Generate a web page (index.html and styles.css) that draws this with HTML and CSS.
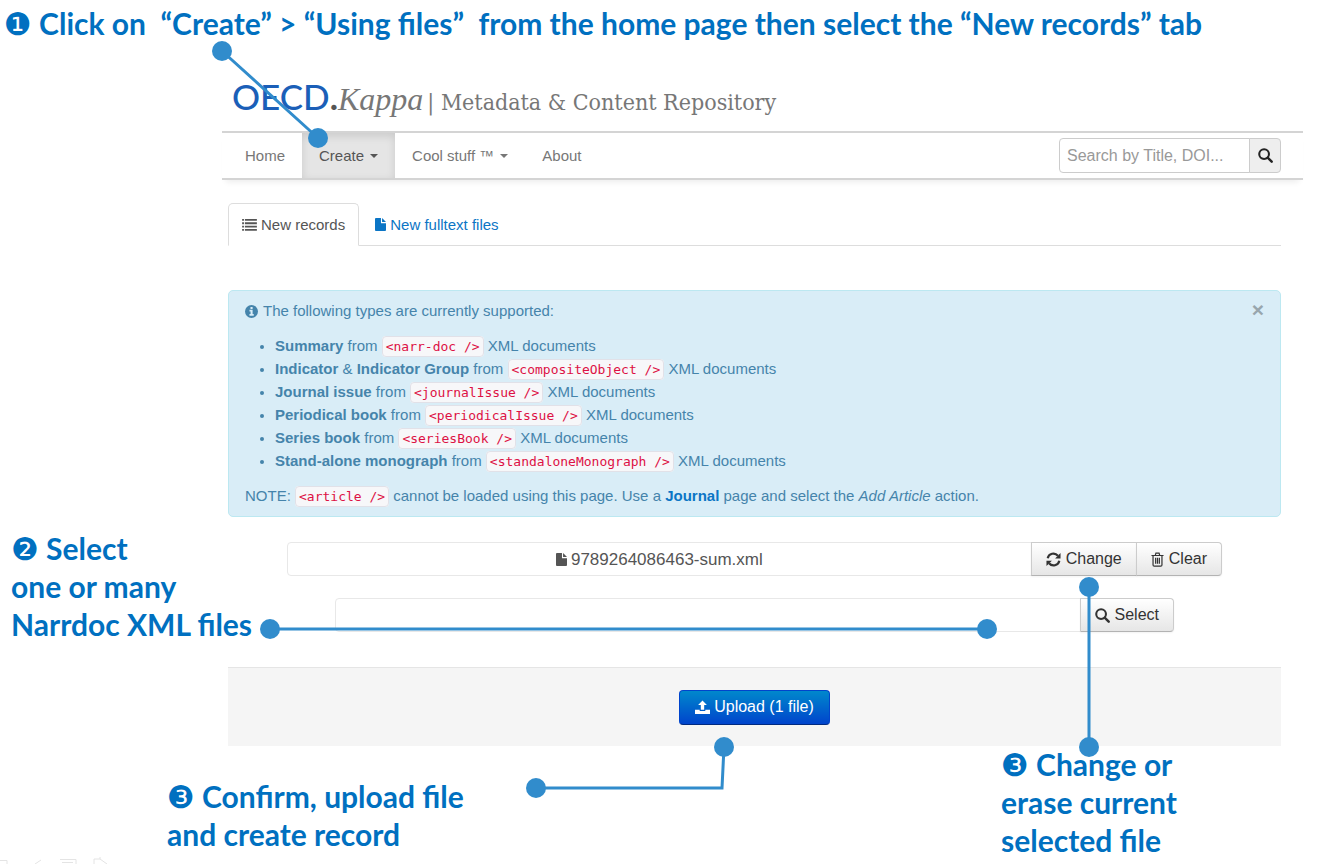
FILE: index.html
```html
<!DOCTYPE html>
<html lang="en">
<head>
<meta charset="utf-8">
<title>OECD.Kappa | Metadata &amp; Content Repository</title>
<link rel="stylesheet" href="styles.css">
</head>
<body>
<svg class="sprite" aria-hidden="true">
  <symbol id="i-search" viewBox="0 0 16 16"><circle cx="6.5" cy="6.5" r="5.2" fill="none" stroke="currentColor" stroke-width="2.2"/><path d="M10.300 10.300l4.300 4.300" stroke="currentColor" stroke-width="2.600" stroke-linecap="round"/></symbol>
  <symbol id="i-file" viewBox="0 0 12 14"><path fill="currentColor" d="M1 0h5.5v5.500H12V13a1 1 0 0 1-1 1H1a1 1 0 0 1-1-1V1a1 1 0 0 1 1-1zM7.700 0L12 4.300H7.700z"/></symbol>
  <symbol id="i-list" viewBox="0 0 16 13"><path fill="currentColor" d="M0 0h2v2H0zM3 0h13v2H3zM0 3.600h2v2H0zM3 3.600h13v2H3zM0 7.200h2v2H0zM3 7.200h13v2H3zM0 10.800h2v2H0zM3 10.800h13v2H3z"/></symbol>
  <symbol id="i-info" viewBox="0 0 14 14"><circle cx="7" cy="7" r="7" fill="currentColor"/><path fill="#d9edf7" d="M5.900 2.200h2.300v2H5.900zM4.800 5.200h3.400v4.500h1.200v1.800H4.800V9.700H6V7H4.800z"/></symbol>
  <symbol id="i-refresh" viewBox="0 0 16 16"><path fill="none" stroke="currentColor" stroke-width="2.300" d="M1.800 6.700A6.200 6.200 0 0 1 12.700 4M14.200 9.300A6.200 6.200 0 0 1 3.300 12"/><path fill="currentColor" d="M15.500 1v5.800H9.700zM.5 15V9.200h5.800z"/></symbol>
  <symbol id="i-trash" viewBox="0 0 14 16"><path fill="none" stroke="currentColor" stroke-width="1.300" d="M.5 3.700h13M2.200 3.700v10.100a1.300 1.300 0 0 0 1.300 1.300h7a1.300 1.300 0 0 0 1.300-1.300V3.700M4.600 3.500l.7-2.300h3.400l.7 2.300M5 6.200v6.500M7 6.200v6.500M9 6.200v6.500"/></symbol>
  <symbol id="i-upload" viewBox="0 0 16 15"><path fill="currentColor" d="M8 0l4.700 4.800H9.800v5H6.200v-5H3.300zM0 10h5v1.200h6V10h5v4.500H0z"/></symbol>
</svg>

<div class="slide">
  <h1 class="callout step-1"><span class="num">❶</span> Click on &nbsp;“Create” &gt; “Using files” &nbsp;from the home page then select the “New records” tab</h1>

  <div class="app">
    <header class="brand">
      <span class="brand-org">OECD</span><span class="brand-dot">.</span><span class="brand-name">Kappa</span>
      <span class="brand-tag">| Metadata &amp; Content Repository</span>
    </header>

    <nav class="navbar">
      <a class="nav-item" href="#home">Home</a>
      <a class="nav-item active" href="#create">Create <span class="caret"></span></a>
      <a class="nav-item" href="#cool">Cool stuff ™ <span class="caret"></span></a>
      <a class="nav-item" href="#about">About</a>
      <form class="search">
        <input class="search-input" type="text" aria-label="Search" placeholder="Search by Title, DOI...">
        <button class="search-button" type="button" aria-label="Search"><svg class="icon"><use href="#i-search"/></svg></button>
      </form>
    </nav>

    <main class="content">
      <div class="tabs">
        <a class="tab selected" href="#records"><svg class="icon-list"><use href="#i-list"/></svg>New records</a>
        <a class="tab" href="#fulltext"><svg class="icon-file"><use href="#i-file"/></svg>New fulltext files</a>
      </div>

      <section class="alert">
        <button class="close" type="button" aria-label="Close">×</button>
        <p><svg class="icon-info"><use href="#i-info"/></svg>The following types are currently supported:</p>
        <ul>
          <li><b>Summary</b> from <code>&lt;narr-doc /&gt;</code> XML documents</li>
          <li><b>Indicator</b> &amp; <b>Indicator Group</b> from <code>&lt;compositeObject /&gt;</code> XML documents</li>
          <li><b>Journal issue</b> from <code>&lt;journalIssue /&gt;</code> XML documents</li>
          <li><b>Periodical book</b> from <code>&lt;periodicalIssue /&gt;</code> XML documents</li>
          <li><b>Series book</b> from <code>&lt;seriesBook /&gt;</code> XML documents</li>
          <li><b>Stand-alone monograph</b> from <code>&lt;standaloneMonograph /&gt;</code> XML documents</li>
        </ul>
        <p>NOTE: <code>&lt;article /&gt;</code> cannot be loaded using this page. Use a <a class="journal" href="#journal">Journal</a> page and select the <i>Add Article</i> action.</p>
      </section>

      <div class="file-row">
        <div class="file-field"><svg class="icon-file"><use href="#i-file"/></svg>9789264086463-sum.xml</div>
        <button class="btn" type="button"><svg class="icon"><use href="#i-refresh"/></svg>Change</button>
        <button class="btn last" type="button"><svg class="icon-trash"><use href="#i-trash"/></svg>Clear</button>
      </div>
      <div class="file-row empty">
        <div class="file-field"></div>
        <button class="btn last" type="button"><svg class="icon"><use href="#i-search"/></svg>Select</button>
      </div>

      <div class="actions">
        <button class="upload" type="button"><svg class="icon"><use href="#i-upload"/></svg>Upload (1 file)</button>
      </div>
    </main>
  </div>

  <p class="callout step-2"><span class="num">❷</span> Select<br>one or many<br>Narrdoc XML files</p>
  <p class="callout step-3"><span class="num">❸</span> Confirm, upload file<br>and create record</p>
  <p class="callout step-4"><span class="num">❸</span> Change or<br>erase current<br>selected file</p>

  <svg class="connectors" width="1319" height="864" viewBox="0 0 1319 864" aria-hidden="true">
    <g fill="none" stroke="#318ccc" stroke-width="3"><path d="M222 51L318 138M270 629H987M1089 587V747M724 747L722 788H536"/></g>
    <g fill="#318ccc"><circle cx="222" cy="51" r="10"/><circle cx="318" cy="138" r="10"/><circle cx="270" cy="629" r="10"/><circle cx="987" cy="629" r="10"/><circle cx="1089" cy="587" r="10"/><circle cx="1089" cy="747" r="10"/><circle cx="724" cy="747" r="10"/><circle cx="536" cy="788" r="10"/></g>
    <path fill="none" stroke="#e4e4e4" d="M0 860.500h7v4M35 864l6-4M60 859.500h16v5M62 862.500h11M94 864v-5h6l7 5M100 859v-2"/>
  </svg>
</div>
</body>
</html>
```
FILE: styles.css
```css
* { box-sizing: border-box; }
body { margin: 0; background: #fff; color: #666; font: 15px/23px "Liberation Sans", Arial, sans-serif; }
p, ul, h1 { margin: 0; }
a { color: inherit; text-decoration: none; }
button, input { font-family: "Liberation Sans", Arial, sans-serif; font-size: 16px; }
.sprite { position: absolute; width: 0; height: 0; }
.slide { position: relative; min-height: 100vh; overflow: hidden; }

.callout { color: #0070c0; font: bold 30px/38px Lato, sans-serif; white-space: nowrap; }
.num { font: 31px/28px "DejaVu Sans", sans-serif; }
.step-1 { padding: 4px 0 0 4px; }
.step-2 { position: absolute; left: 11px; top: 529px; }
.step-3 { position: absolute; left: 167px; top: 777px; }
.step-4 { position: absolute; left: 1001px; top: 745px; }
.connectors { position: absolute; left: 0; top: 0; pointer-events: none; }

.app { padding: 0 16px 0 222px; }
.brand { display: flex; align-items: baseline; height: 89px; padding: 32px 0 0 10px; line-height: 44px; white-space: nowrap; }
.brand-org { font: 500 35px/44px Lato, sans-serif; color: #1b5fb8; }
.brand-dot { font: bold 35px/44px Lato, sans-serif; color: #555; }
.brand-name { font: italic 32px/44px "Liberation Serif", serif; color: #777; }
.brand-tag { margin-left: 4px; font: 23px/44px "DejaVu Serif Condensed", "DejaVu Serif", serif; font-stretch: condensed; color: #777; }

.navbar { display: flex; height: 49px; padding-left: 6px; padding-right: 22px; border-top: 2px solid #d4d4d4; border-bottom: 2px solid #d4d4d4; box-shadow: 0 6px 6px -4px rgba(0,0,0,.08); color: #777; }
.nav-item { display: flex; align-items: center; padding: 0 17px; }
.nav-item.active { background: #e5e5e5; box-shadow: inset 0 3px 8px rgba(0,0,0,.12); color: #555; }
.caret { margin-left: 6px; border: 4px solid transparent; border-top-color: currentColor; border-bottom: 0; }
.search { display: flex; align-self: center; width: 222px; height: 35px; margin-left: auto; }
.search-input { flex: 1; min-width: 0; padding: 0 7px; border: 1px solid #ccc; border-radius: 4px 0 0 4px; }
.search-input::placeholder { color: #999; }
.search-button { display: flex; align-items: center; justify-content: center; width: 32px; padding: 0; margin-left: -1px; border: 1px solid #ccc; border-radius: 0 4px 4px 0; background: #eee; color: #222; }

.icon { width: 15px; height: 15px; flex: none; }
.icon-list { width: 15px; height: 12px; margin-right: 4px; }
.icon-file { width: 11px; height: 13px; margin-right: 4px; }
.icon-info { width: 13px; height: 13px; margin-right: 5px; vertical-align: -2px; }
.icon-trash { width: 13px; height: 15px; }

.content { padding: 23px 22px 0 6px; }
.tabs { display: flex; height: 43px; border-bottom: 1px solid #ddd; color: #0b75c5; }
.tab { display: flex; align-items: center; height: 43px; padding: 0 13px; border: 1px solid transparent; margin-right: 2px; }
.tab.selected { border-color: #ddd; border-bottom-color: #fff; border-radius: 5px 5px 0 0; background: #fff; color: #555; }

.alert { position: relative; margin-top: 44px; padding: 8px 16px 9px; border: 1px solid #bce8f1; border-radius: 5px; background: #d9edf7; color: #4584ab; }
.alert ul { margin: 12px 0; padding-left: 30px; }
.alert li::marker { font-size: 13px; }
.alert b, .journal { font-weight: 700; }
.journal { color: #0b75c5; }
.alert code { padding: 2px 3px; border: 1px solid #e1e1e8; border-radius: 4px; background: #f7f7f9; color: #d14; font: 13px/16px "DejaVu Sans Mono", monospace; }
.close { position: absolute; right: 16px; top: 8px; padding: 0; border: 0; background: none; color: #98a6ad; font: bold 21px/21px "Liberation Sans", sans-serif; }

.file-row { display: flex; height: 34px; margin-top: 25px; padding: 0 59px; }
.file-row.empty { margin-top: 22px; padding: 0 107px; }
.file-field { display: flex; flex: 1; align-items: center; justify-content: center; border: 1px solid #e8e8e8; border-radius: 4px 0 0 4px; color: #555; font: 17px/23px "Liberation Sans", Arial, sans-serif; }
.btn, .upload { display: flex; align-items: center; gap: 4px; border: 1px solid #ccc; }
.btn { padding: 0 14px; margin-left: -1px; gap: 5px; border-bottom-color: #b3b3b3; background: linear-gradient(#fff, #e6e6e6); box-shadow: 0 1px 2px rgba(0,0,0,.05); color: #333; }
.btn.last { border-radius: 0 4px 4px 0; }
.actions { display: flex; align-items: center; justify-content: center; height: 79px; margin-top: 35px; border-top: 1px solid #e5e5e5; background: #f5f5f5; }
.upload { height: 35px; padding: 0 15px; border-color: #04c #04c #002a80; border-radius: 4px; background: linear-gradient(#08c, #04c); color: #fff; }
```
